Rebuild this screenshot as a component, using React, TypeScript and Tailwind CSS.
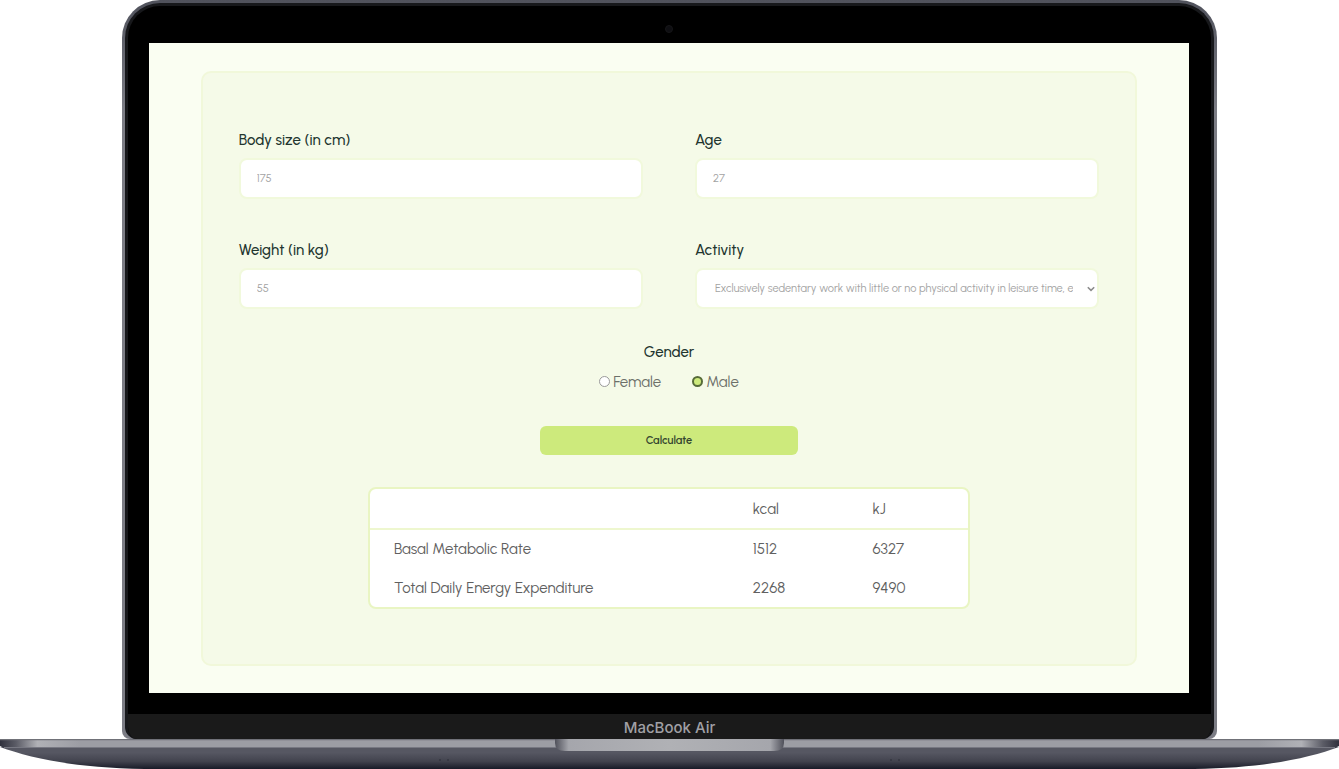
import React, { useState } from "react";

const inputClass =
  "h-[41px] w-full rounded-lg border-2 border-[#f1f9dc] bg-white px-4 text-[11px] text-[#a3a3a3] outline-none";
const labelClass = "block text-[15px] leading-5 font-medium text-[#22352f]";

function Field({ id, label, value }: { id: string; label: string; value: string }) {
  return (
    <div className="flex flex-col gap-2">
      <label htmlFor={id} className={labelClass}>
        {label}
      </label>
      <input id={id} type="text" inputMode="numeric" defaultValue={value} className={inputClass} />
    </div>
  );
}

function ActivitySelect() {
  return (
    <div className="flex flex-col gap-2">
      <label htmlFor="activity" className={labelClass}>
        Activity
      </label>
      <div className="relative">
        <select
          id="activity"
          className="h-[41px] w-full appearance-none rounded-lg border-2 border-[#f1f9dc] bg-white pt-px pr-6 pl-[18px] text-[11px] text-[#a3a3a3] outline-none"
        >
          <option>
            Exclusively sedentary work with little or no physical activity in leisure time, e.g. office work
          </option>
          <option>Sedentary work with occasional walking or standing</option>
          <option>Mostly walking and standing work</option>
          <option>Physically demanding work</option>
        </select>
        <svg
          className="pointer-events-none absolute top-1/2 right-1 h-2 w-2 -translate-y-1/2"
          viewBox="0 0 8 8"
          fill="none"
          stroke="#8c8c8c"
          strokeWidth="1.6"
          aria-hidden="true"
        >
          <path d="M0.8 2.2 L4 5.4 L7.2 2.2" />
        </svg>
      </div>
    </div>
  );
}

function GenderOption({
  value,
  checked,
  onSelect,
}: {
  value: string;
  checked: boolean;
  onSelect: (v: string) => void;
}) {
  return (
    <label className="flex items-center gap-[3px] text-[15px] leading-5 text-[#6c6f69]">
      <input
        type="radio"
        name="gender"
        value={value}
        checked={checked}
        onChange={() => onSelect(value)}
        className="mb-px size-[11px] appearance-none rounded-full border border-[#9a9a9a] bg-white checked:border-2 checked:border-[#566b38] checked:bg-[#cdea7c]"
      />
      {value}
    </label>
  );
}

function Results() {
  const rows = [
    ["Basal Metabolic Rate", "1512", "6327"],
    ["Total Daily Energy Expenditure", "2268", "9490"],
  ];
  return (
    <div className="mt-8 w-[70%] overflow-hidden rounded-lg border-2 border-[#e9f5c3] bg-white">
      <table className="w-full table-fixed border-collapse text-left text-[15px] leading-5 text-[#606060]">
        <thead>
          <tr className="h-10 border-b-2 border-[#eef7cf]">
            <th className="w-3/5 pl-6 font-normal" aria-label="Measure" />
            <th className="w-1/5 pl-6 font-normal">kcal</th>
            <th className="w-1/5 pl-6 font-normal">kJ</th>
          </tr>
        </thead>
        <tbody>
          {rows.map(([name, kcal, kj]) => (
            <tr key={name} className="h-[39px]">
              <td className="pl-6">{name}</td>
              <td className="pl-6">{kcal}</td>
              <td className="pl-6">{kj}</td>
            </tr>
          ))}
        </tbody>
      </table>
    </div>
  );
}

function Calculator() {
  const [gender, setGender] = useState("Male");
  return (
    <form
      onSubmit={(e) => e.preventDefault()}
      className="flex flex-col items-center rounded-[10px] border-2 border-[#f1f8da] bg-[#f5fae8] px-9 pt-[57px] pb-[55px]"
    >
      <div className="grid w-full grid-cols-2 gap-x-[52px] gap-y-[41px]">
        <Field id="size" label="Body size (in cm)" value="175" />
        <Field id="age" label="Age" value="27" />
        <Field id="weight" label="Weight (in kg)" value="55" />
        <ActivitySelect />
      </div>
      <fieldset className="mt-[33px] flex flex-col items-center">
        <legend className={labelClass + " mx-auto"}>Gender</legend>
        <div className="mt-[10px] flex gap-[31px]">
          <GenderOption value="Female" checked={gender === "Female"} onSelect={setGender} />
          <GenderOption value="Male" checked={gender === "Male"} onSelect={setGender} />
        </div>
      </fieldset>
      <button
        type="submit"
        className="mt-[34px] h-[29px] w-[30%] rounded-md bg-[#cdea7c] pt-0.5 text-[11px] font-semibold text-[#34452f]"
      >
        Calculate
      </button>
      <Results />
    </form>
  );
}

function LaptopBase() {
  return (
    <svg className="block h-[30px] w-full" viewBox="0 0 1339 30" preserveAspectRatio="none" aria-hidden="true">
      <defs>
        <linearGradient id="under" x1="0" y1="0" x2="0" y2="1">
          <stop offset="0.25" stopColor="#565762" />
          <stop offset="0.65" stopColor="#42434e" />
          <stop offset="1" stopColor="#181a27" />
        </linearGradient>
        <linearGradient id="deck" x1="0" y1="0" x2="1" y2="0">
          <stop offset="0" stopColor="#30313d" />
          <stop offset="0.012" stopColor="#5b5c66" />
          <stop offset="0.028" stopColor="#b0b1b6" />
          <stop offset="0.06" stopColor="#9c9da4" />
          <stop offset="0.94" stopColor="#9c9da4" />
          <stop offset="0.972" stopColor="#b0b1b6" />
          <stop offset="0.988" stopColor="#5b5c66" />
          <stop offset="1" stopColor="#30313d" />
        </linearGradient>
        <linearGradient id="notch" x1="0" y1="0" x2="1" y2="0">
          <stop offset="0" stopColor="#50515b" />
          <stop offset="0.06" stopColor="#a5a6ac" />
          <stop offset="0.5" stopColor="#b0b1b5" />
          <stop offset="0.94" stopColor="#a5a6ac" />
          <stop offset="1" stopColor="#50515b" />
        </linearGradient>
      </defs>
      <path d="M0 8 C30 19 75 29 145 30 H1194 C1264 29 1309 19 1339 8 Z" fill="url(#under)" />
      <path d="M0 0 H1339 V7 L1335 9 H4 L0 7 Z" fill="url(#deck)" />
      <path d="M0 0 H1339 V1.2 H0 Z" fill="#707178" />
      <path d="M4 8.5 H1335" stroke="#777882" strokeWidth="1" />
      <path d="M555 0 H784 V4 Q784 12 774 12 H565 Q555 12 555 4 Z" fill="url(#notch)" />
      <g fill="#353641">
        <circle cx="440" cy="21" r="1" />
        <circle cx="448" cy="21" r="1" />
        <circle cx="891" cy="21" r="1" />
        <circle cx="899" cy="21" r="1" />
      </g>
    </svg>
  );
}

export default function App() {
  return (
    <main className="w-full overflow-hidden bg-white font-['Urbanist','Lato',sans-serif]">
      <div className="mx-auto w-[81.8%] rounded-t-[38px] rounded-b-lg bg-[#6b6c75] bg-linear-to-b from-[#50525c] from-0% to-[#7c7d85] to-15% px-[3px] pt-[3px]">
        <div className="overflow-hidden rounded-t-[35px] rounded-b-[12px] border-x-3 border-t-3 border-[#17181b] bg-black">
          <div className="flex h-[37px] items-center justify-center">
            <span className="mt-[9px] size-2 rounded-full border border-[#161618] bg-[#0e0e12]" />
          </div>
          <div className="mr-[22px] ml-[21px] bg-[#fafef2] px-[4.8%] pt-7 pb-[27px]">
            <Calculator />
          </div>
          <div className="h-[21px]" />
          <div className="flex h-[25px] items-center justify-center bg-[#1a1a1a] pt-[3px] font-['Inter',sans-serif] text-[15px] leading-5 font-medium text-[#a0a0a5]">
            MacBook Air
          </div>
        </div>
      </div>
      <LaptopBase />
    </main>
  );
}
